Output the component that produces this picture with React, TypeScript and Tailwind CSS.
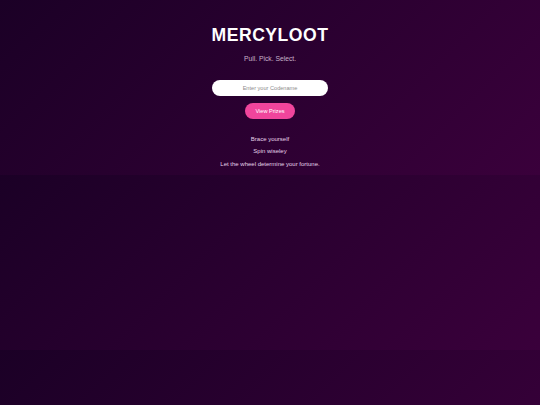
import React from "react";

export default function App() {
  return (
    <div
      className="w-full min-h-[405px] bg-[linear-gradient(135deg,#1b0026,#3a003b)] bg-size-[100%_175px] bg-repeat"
      style={{ fontFamily: '"Liberation Sans", Arial, sans-serif' }}
    >
      <div className="flex flex-col items-center h-[175px]">
        <h1 className="mt-[26px] text-[17.6px] leading-[18px] font-bold text-white tracking-[0.5px]">
          MERCYLOOT
        </h1>
        <p className="mt-[10px] text-[6.75px] leading-[10px] text-[#c8b2c9]">
          Pull. Pick. Select.
        </p>
        <input
          type="text"
          placeholder="Enter your Codename"
          className="mt-[16px] w-[116px] h-[16px] rounded-full bg-white text-center text-[5.6px] text-[#333] outline-none placeholder:text-[#8c8c8c]"
        />
        <button className="mt-[7px] w-[50px] h-[16px] rounded-full bg-[#f0459c] text-white text-[5.6px] leading-[16px]">
          View Prizes
        </button>
        <div className="mt-[13.6px] flex flex-col items-center text-[6px] leading-[12.7px] text-[#e6d2e8]">
          <p>Brace yourself</p>
          <p>Spin wiseley</p>
          <p>Let the wheel determine your fortune.</p>
        </div>
      </div>
    </div>
  );
}
